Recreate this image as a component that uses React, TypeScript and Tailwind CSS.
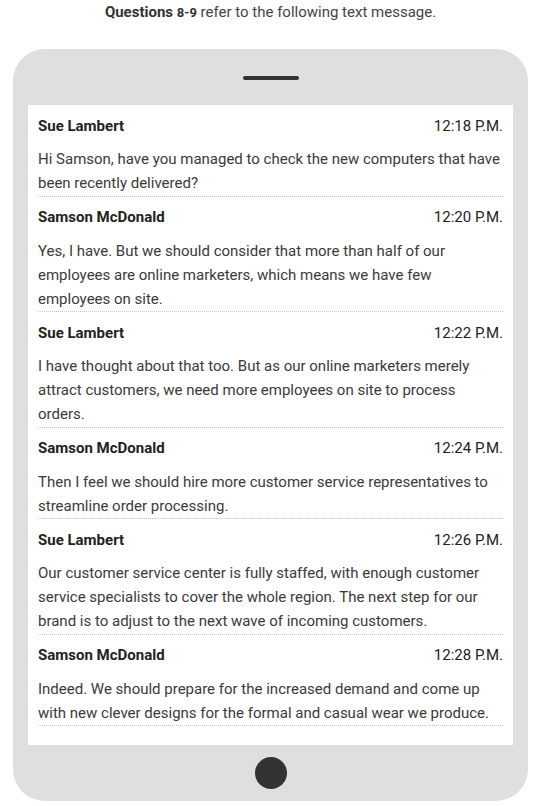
import React from "react";

type Message = {
  name: string;
  time: string;
  text: string;
};

const messages: Message[] = [
  {
    name: "Sue Lambert",
    time: "12:18 P.M.",
    text: "Hi Samson, have you managed to check the new computers that have been recently delivered?",
  },
  {
    name: "Samson McDonald",
    time: "12:20 P.M.",
    text: "Yes, I have. But we should consider that more than half of our employees are online marketers, which means we have few employees on site.",
  },
  {
    name: "Sue Lambert",
    time: "12:22 P.M.",
    text: "I have thought about that too. But as our online marketers merely attract customers, we need more employees on site to process orders.",
  },
  {
    name: "Samson McDonald",
    time: "12:24 P.M.",
    text: "Then I feel we should hire more customer service representatives to streamline order processing.",
  },
  {
    name: "Sue Lambert",
    time: "12:26 P.M.",
    text: "Our customer service center is fully staffed, with enough customer service specialists to cover the whole region. The next step for our brand is to adjust to the next wave of incoming customers.",
  },
  {
    name: "Samson McDonald",
    time: "12:28 P.M.",
    text: "Indeed. We should prepare for the increased demand and come up with new clever designs for the formal and casual wear we produce.",
  },
];

const App: React.FC = () => {
  return (
    <div
      className="w-[533px] h-[806px] bg-white overflow-hidden"
      style={{ fontFamily: "Roboto, 'Liberation Sans', sans-serif" }}
    >
      <p className="w-[541px] text-center text-[15px] leading-6 text-[#444]">
        <span className="font-bold text-[#333]">Questions</span>{" "}
        <span className="font-bold text-[13px] text-[#333]">8-9</span> refer to
        the following text message.
      </p>
      <div className="ml-[13px] mt-[24px] w-[515px] h-[752px] rounded-[32px] bg-[#dfdfdf] flex flex-col items-center">
        <div className="h-[56px] flex items-center justify-center shrink-0">
          <div className="w-[56px] h-[4px] rounded-full bg-[#333] mt-[1px]" />
        </div>
        <div className="w-[485px] h-[640px] bg-white px-[10px]">
          {messages.map((m, idx) => (
            <div
              key={idx}
              className="pt-[9px] pb-[0.5px] border-b border-dotted border-[#c4c4c4]"
            >
              <div className="flex justify-between items-center h-6 mb-[9px] text-[15px] text-[#222]">
                <span className="font-bold">{m.name}</span>
                <span>{m.time}</span>
              </div>
              <p className="text-[15px] leading-6 text-[#3a3a3a]">{m.text}</p>
            </div>
          ))}
        </div>
        <div className="flex-1 flex items-center justify-center">
          <div className="w-[32px] h-[32px] rounded-full bg-[#333]" />
        </div>
      </div>
    </div>
  );
};

export default App;
